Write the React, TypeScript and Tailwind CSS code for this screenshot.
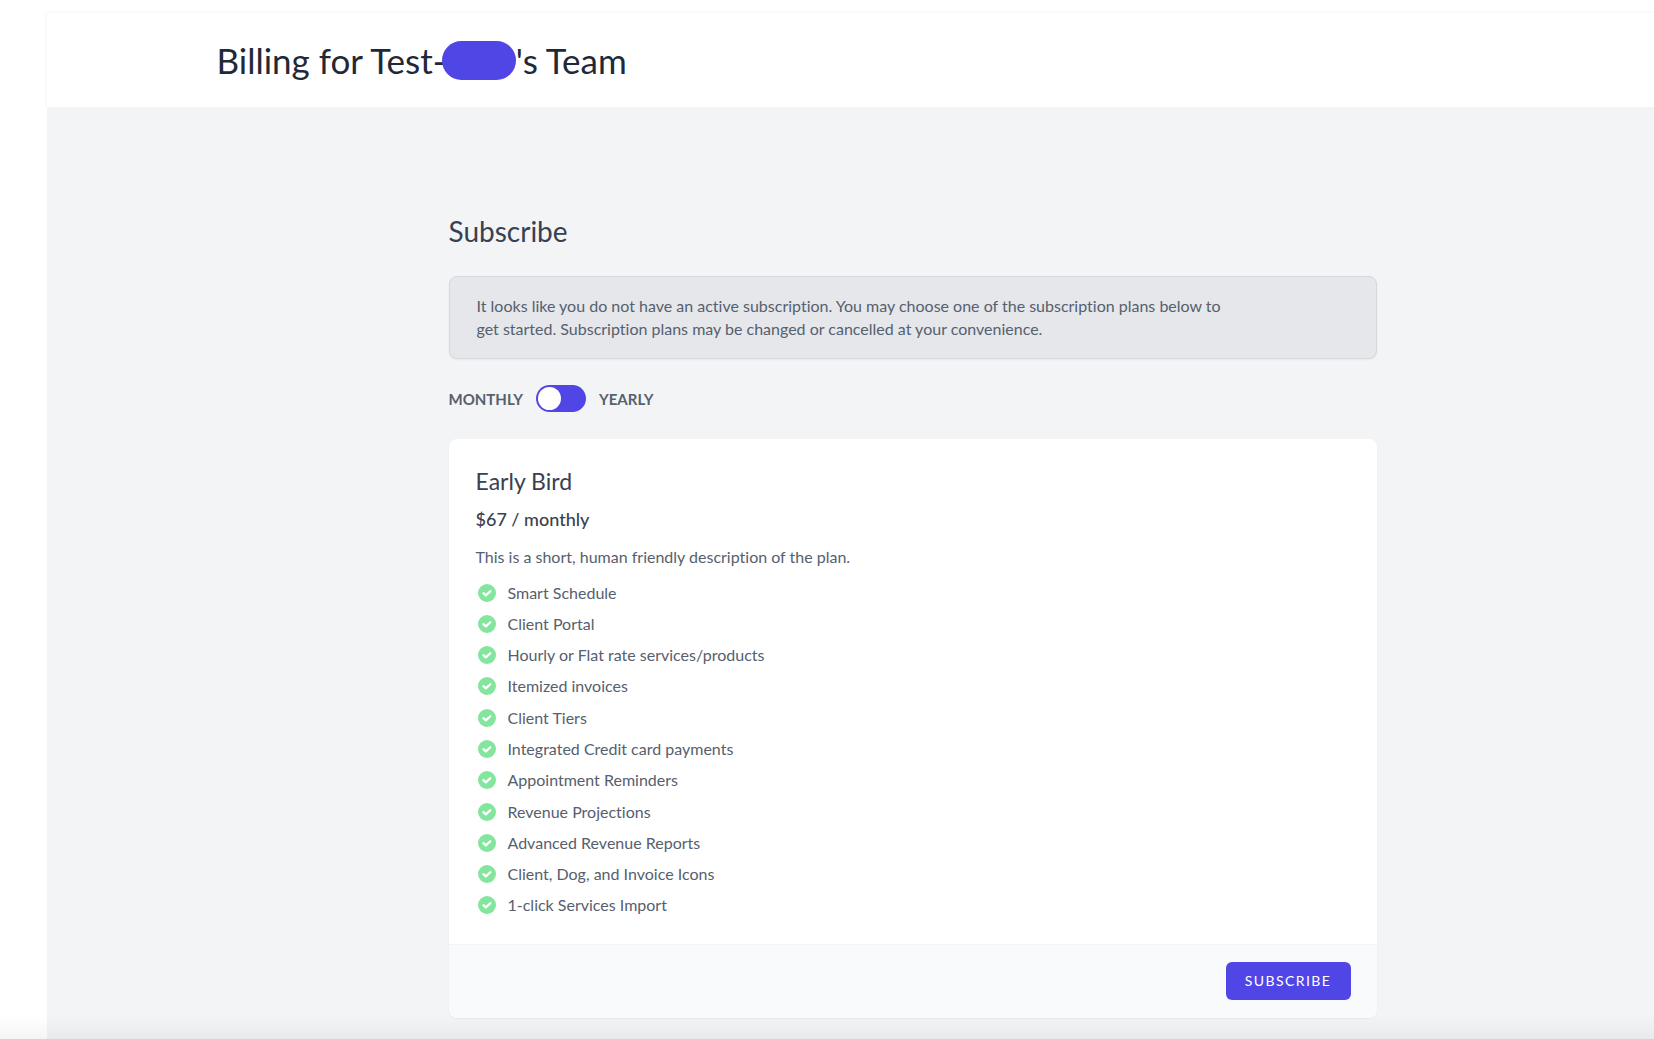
import { useState } from "react";

const features = [
  "Smart Schedule",
  "Client Portal",
  "Hourly or Flat rate services/products",
  "Itemized invoices",
  "Client Tiers",
  "Integrated Credit card payments",
  "Appointment Reminders",
  "Revenue Projections",
  "Advanced Revenue Reports",
  "Client, Dog, and Invoice Icons",
  "1-click Services Import",
];

interface ToggleProps {
  checked: boolean;
  onChange: (checked: boolean) => void;
}

const CheckIcon = () => (
  <svg viewBox="0 0 20 20" className="ml-0.5 size-[18px] shrink-0" aria-hidden="true">
    <circle cx="10" cy="10" r="10" fill="#84e59f" />
    <path
      d="M6 10.2l2.7 2.5 5-4.7"
      fill="none"
      stroke="#fff"
      strokeWidth="2.5"
      strokeLinecap="round"
      strokeLinejoin="round"
    />
  </svg>
);

const Toggle: React.FC<ToggleProps> = ({ checked, onChange }) => (
  <input
    type="checkbox"
    role="switch"
    aria-label="Yearly billing"
    checked={checked}
    onChange={(e) => onChange(e.target.checked)}
    className="h-[27px] w-[50px] cursor-pointer appearance-none rounded-full bg-[#4f46e5] p-0.5 before:block before:size-[23px] before:rounded-full before:bg-white checked:before:ml-auto"
  />
);

const App = () => {
  const [yearly, setYearly] = useState(false);

  return (
    <div className="min-h-screen bg-white pt-[13px] pl-[47px] font-['Lato',sans-serif] text-[#56606e] [font-variant-ligatures:none]">
      <header className="bg-white shadow-[0_0_3px_rgba(0,0,0,0.08)]">
        <div className="mx-auto flex h-[94px] max-w-[1332px] items-center px-8">
          <h1 className="flex items-center text-[35px] leading-10 text-[#1f2937]">
            Billing for Test-
            <span className="-ml-1 h-[39px] w-[74px] rounded-full bg-[#4f46e5]" />
            's Team
          </h1>
        </div>
      </header>

      <main className="relative min-h-[932px] bg-[#f3f4f6] pt-[106px]">
        <div className="mx-auto max-w-[1332px] pr-[140px] pl-[264px]">
          <h2 className="text-[28px] leading-9 text-[#374151]">Subscribe</h2>

          <div className="mt-[27px] rounded-lg border border-[#d5d8de] bg-[#e5e7eb] px-[27px] pt-[17px] pb-[18px] shadow-xs">
            <p className="max-w-3xl text-base leading-[23px]">
              It looks like you do not have an active subscription. You may choose one of the subscription plans below to
              get started. Subscription plans may be changed or cancelled at your convenience.
            </p>
          </div>

          <div className="mt-[26px] flex items-center gap-[13px] text-[15px] leading-6 font-bold">
            <span>MONTHLY</span>
            <Toggle checked={yearly} onChange={setYearly} />
            <span>YEARLY</span>
          </div>

          <section className="mt-[27px] overflow-hidden rounded-lg bg-white shadow-xs">
            <div className="px-[27px] pt-[26px] pb-[23px]">
              <h3 className="text-[23px] leading-8 text-[#374151]">Early Bird</h3>
              <p className="mt-2 text-lg leading-7 font-medium text-[#374151]">$67 / monthly</p>
              <p className="mt-3 text-base leading-6">This is a short, human friendly description of the plan.</p>
              <ul className="mt-2 grid h-[344px] auto-rows-fr">
                {features.map((feature) => (
                  <li key={feature} className="flex items-center gap-3 text-base leading-6">
                    <CheckIcon />
                    {feature}
                  </li>
                ))}
              </ul>
            </div>
            <div className="flex justify-end border-t border-[#f3f4f6] bg-[#f9fafb] px-[26px] pt-[17px] pb-[18px]">
              <button
                type="button"
                className="h-[38px] w-[125px] rounded-md bg-[#4f46e5] text-sm font-normal tracking-widest text-white uppercase"
              >
                Subscribe
              </button>
            </div>
          </section>
        </div>
      </main>

      <div className="pointer-events-none fixed inset-x-0 bottom-0 h-6 bg-linear-to-b from-transparent to-black/4" />
    </div>
  );
};

export default App;
